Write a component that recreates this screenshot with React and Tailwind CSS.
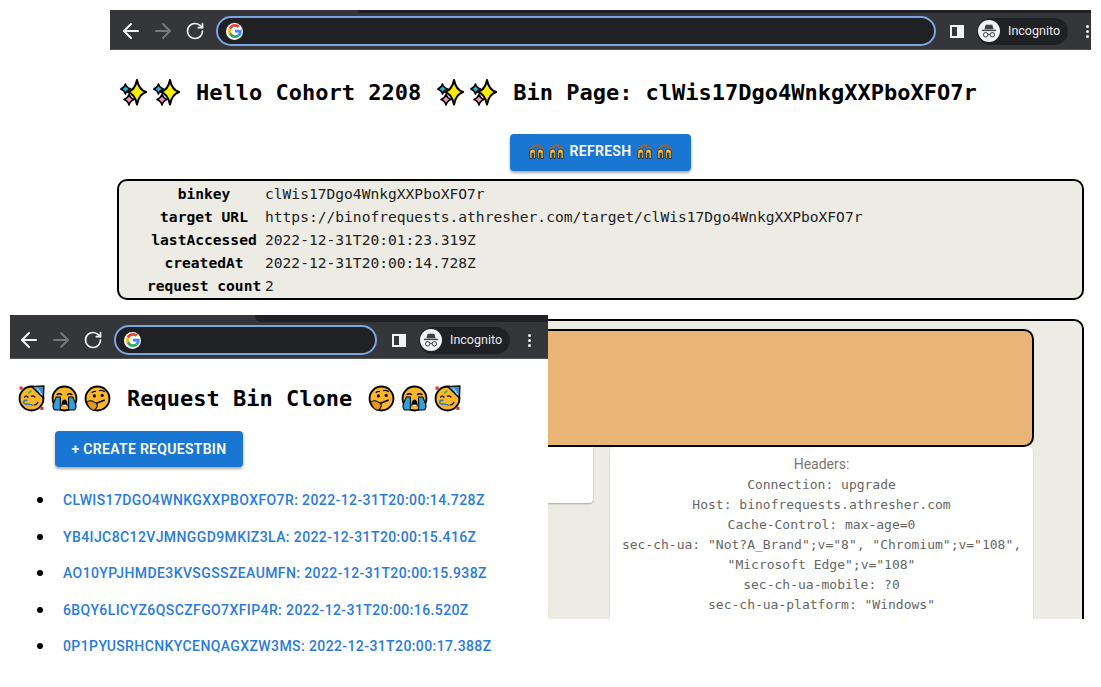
import React from 'react';
import { ArrowLeft, ArrowRight, RotateCw } from 'lucide-react';

const mono = 'font-["DejaVu_Sans_Mono",monospace]';

const GoogleG = () => (
  <div className="flex h-[17px] w-[17px] shrink-0 items-center justify-center rounded-full bg-white">
    <svg viewBox="0 0 48 48" width="14" height="14">
      <path fill="#EA4335" d="M24 9.5c3.5 0 6.7 1.2 9.2 3.6l6.9-6.9C35.9 2.4 30.5 0 24 0 14.6 0 6.5 5.4 2.6 13.2l8 6.2C12.5 13.7 17.8 9.5 24 9.5z" />
      <path fill="#4285F4" d="M46.9 24.5c0-1.600-.2-3.100-.4-4.500H24v9h12.900c-.6 3-2.200 5.500-4.700 7.200l7.700 6c4.500-4.200 7-10.300 7-17.700z" />
      <path fill="#FBBC05" d="M10.500 28.600c-.5-1.400-.8-3-.8-4.600s.3-3.200.8-4.600l-8-6.200C.9 16.500 0 20.100 0 24s.9 7.500 2.600 10.800l7.900-6.200z" />
      <path fill="#34A853" d="M24 48c6.500 0 11.900-2.100 15.900-5.800l-7.700-6c-2.200 1.400-4.900 2.300-8.200 2.300-6.200 0-11.500-4.200-13.400-9.900l-8 6.200C6.500 42.600 14.600 48 24 48z" />
    </svg>
  </div>
);

const IncognitoIcon = () => (
  <div className="flex h-[22px] w-[22px] shrink-0 items-center justify-center rounded-full bg-[#f1f3f4]">
    <svg viewBox="0 0 24 24" width="20" height="20" fill="none">
      <path d="M8 4.500h8l1.500 5.500h-11z" fill="#3c4043" />
      <rect x="3.500" y="10.500" width="17" height="1.600" fill="#3c4043" />
      <circle cx="8" cy="16.500" r="2.700" stroke="#3c4043" strokeWidth="1.200" />
      <circle cx="16" cy="16.500" r="2.700" stroke="#3c4043" strokeWidth="1.200" />
      <path d="M10.500 16h3" stroke="#3c4043" strokeWidth="1.200" />
    </svg>
  </div>
);

const ChromeBar = ({ stripClass, tabClass, pillClass, padClass, sideClass }) => (
  <div className="flex h-full flex-col border-b border-[#55565a] bg-[#35363a]">
    <div className={`flex ${stripClass}`}>
      <div className={tabClass} />
      <div className="flex-1 rounded-bl-[6px] bg-[#202124]" />
    </div>
    <div className={`flex flex-1 items-center ${padClass}`}>
      <div className="flex items-center gap-[8px]">
        <ArrowLeft size={24} color="#f1f3f4" />
        <ArrowRight size={24} color="#77787b" />
        <div className="flex h-[24px] w-[24px] items-center justify-center">
          <RotateCw size={20} color="#f1f3f4" />
        </div>
      </div>
      <div className={`ml-[9px] flex h-[30px] items-center rounded-full border-2 border-[#7ba5e3] bg-[#202124] pl-[8px] ${pillClass}`}>
        <GoogleG />
      </div>
      <div className={`flex h-[13px] w-[14px] justify-end border-2 border-[#f1f3f4] ${sideClass}`}>
        <div className="h-full w-[5px] bg-[#f1f3f4]" />
      </div>
      <div className="ml-[13px] flex h-[27px] w-[91px] items-center gap-[8px] rounded-full bg-[#202124] pl-[1px]">
        <IncognitoIcon />
        <span className="font-['Roboto',sans-serif] text-[12.5px] text-[#e8eaed]">Incognito</span>
      </div>
      <div className="ml-[18px] flex flex-col gap-[2px]">
        <div className="h-[3px] w-[3px] rounded-full bg-[#f1f3f4]" />
        <div className="h-[3px] w-[3px] rounded-full bg-[#f1f3f4]" />
        <div className="h-[3px] w-[3px] rounded-full bg-[#f1f3f4]" />
      </div>
    </div>
  </div>
);

const Sparkles = () => (
  <svg viewBox="0 0 27 27" width="27" height="27" className="shrink-0">
    <path d="M9 15.500 Q10 19 14 20.500 Q10 22 9 26 Q8 22 4 20.500 Q8 19 9 15.500z" fill="#f38fc0" stroke="#000" strokeWidth="1.600" strokeLinejoin="round" />
    <path d="M5.500 5 Q6.300 8.500 10.500 10 Q6.300 11.500 5.500 15 Q4.700 11.500 0.800 10 Q4.700 8.500 5.500 5z" fill="#28b5e0" stroke="#000" strokeWidth="1.600" strokeLinejoin="round" />
    <path d="M17 1 Q19 11 26.200 13 Q19 15 17 25.500 Q15 15 7.800 13 Q15 11 17 1z" fill="#fcec00" stroke="#000" strokeWidth="2" strokeLinejoin="round" />
  </svg>
);

const Face = ({ children }) => (
  <svg viewBox="0 0 26 26" width="27" height="27" className="shrink-0">
    <circle cx="13" cy="13" r="11.500" fill="#fbb62a" stroke="#000" strokeWidth="1.800" />
    {children}
  </svg>
);

const Partying = () => (
  <Face>
    <path d="M13 1.500 L25 0.800 L24.500 12.500z" fill="#3d8ecb" stroke="#000" strokeWidth="1.200" strokeLinejoin="round" />
    <path d="M18 2.500 Q21 5.500 22.500 9.500" stroke="#a5d0f0" strokeWidth="1.100" fill="none" />
    <path d="M10 8 L13 5.500" stroke="#3fae3f" strokeWidth="1.500" />
    <path d="M6 12 Q8 9.500 10 12 M12.500 11 Q15 9.500 16.500 12" stroke="#000" strokeWidth="1.300" fill="none" />
    <path d="M9 14.500 Q5 14.500 5.500 17 Q6 19 11 18.500 Q13 18.500 14 20" stroke="#2a83c9" strokeWidth="1.600" fill="none" />
    <path d="M15 19.500 Q18 19 19.500 16.500" stroke="#000" strokeWidth="1.100" fill="none" />
    <rect x="1.500" y="1.500" width="3" height="3" fill="#d22f27" />
    <rect x="21.500" y="21" width="3" height="3" fill="#d22f27" />
  </Face>
);

const Crying = () => (
  <Face>
    <path d="M5.500 9.500 Q8 7.500 10.500 9.500 M15.500 9.500 Q18 7.500 20.500 9.500" stroke="#000" strokeWidth="1.400" fill="none" />
    <path d="M10 20.500 Q10 14 13 14 Q16 14 16 20.500z" fill="#000" />
    <path d="M11 19 h4 v1.500 h-4z" fill="#fff" />
    <path d="M5 11.500 H9 V24 H3.500 Q1.500 22.500 2 19z" fill="#2fa0dc" stroke="#000" strokeWidth="1" />
    <path d="M17 11.500 H21 L24 19 Q24.500 22.500 22.500 24 H17z" fill="#2fa0dc" stroke="#000" strokeWidth="1" />
  </Face>
);

const Thinking = () => (
  <Face>
    <path d="M7.500 7.500 Q9.500 5.500 11.500 6.500 M14.500 5.500 Q17.500 4.500 20 6.500" stroke="#000" strokeWidth="1.300" fill="none" />
    <circle cx="10" cy="10.500" r="1.500" fill="#000" />
    <circle cx="17.500" cy="10" r="1.500" fill="#000" />
    <path d="M12 17.500 L20 14.500" stroke="#000" strokeWidth="1.500" />
    <path d="M2.500 16.500 Q5 14.500 8 15.500 L12 17.500 Q13.500 20 12 22 L10 24.500 Q5 24 2.500 16.500z" fill="#e5981b" stroke="#000" strokeWidth="1" strokeLinejoin="round" />
  </Face>
);

const RaisedHands = () => (
  <svg viewBox="0 0 15 15" width="15" height="15" className="shrink-0">
    <path d="M2 5 Q7.500 -2.500 13 5" stroke="#b5601b" strokeWidth="2.200" fill="none" strokeDasharray="2 0.500" />
    <path d="M0.700 14.500 V7 Q3 3.500 6.300 6.500 V14.500 H4.500 V9 H3 V14.500z" fill="#fab733" stroke="#1a1a1a" strokeWidth="0.700" strokeLinejoin="round" />
    <path d="M8.700 6.500 Q12 3.500 14.300 7 V14.500 H12 V9 H10.500 V14.500 H8.700z" fill="#fab733" stroke="#1a1a1a" strokeWidth="0.700" strokeLinejoin="round" />
  </svg>
);

const binRows = [
  ['binkey', 'clWis17Dgo4WnkgXXPboXFO7r'],
  ['target URL', 'https://binofrequests.athresher.com/target/clWis17Dgo4WnkgXXPboXFO7r'],
  ['lastAccessed', '2022-12-31T20:01:23.319Z'],
  ['createdAt', '2022-12-31T20:00:14.728Z'],
  ['request count', '2'],
];

const headers = [
  'Connection: upgrade',
  'Host: binofrequests.athresher.com',
  'Cache-Control: max-age=0',
  'sec-ch-ua: "Not?A_Brand";v="8", "Chromium";v="108", "Microsoft Edge";v="108"',
  'sec-ch-ua-mobile: ?0',
  'sec-ch-ua-platform: "Windows"',
];

const bins = [
  'CLWIS17DGO4WNKGXXPBOXFO7R: 2022-12-31T20:00:14.728Z',
  'YB4IJC8C12VJMNGGD9MKIZ3LA: 2022-12-31T20:00:15.416Z',
  'AO10YPJHMDE3KVSGSSZEAUMFN: 2022-12-31T20:00:15.938Z',
  '6BQY6LICYZ6QSCZFGO7XFIP4R: 2022-12-31T20:00:16.520Z',
  '0P1PYUSRHCNKYCENQAGXZW3MS: 2022-12-31T20:00:17.388Z',
];

export default function App() {
  return (
    <div className="relative h-[687px] w-[1101px] overflow-hidden bg-white">
      {/* back window, bin page */}
      <div className="absolute left-[110px] top-[10px] h-[609px] w-[981px]">
        <div className="h-[40px]">
          <ChromeBar stripClass="h-[3px]" tabClass="w-[248px]" padClass="pl-[9px]" pillClass="w-[720px]" sideClass="ml-[14px]" />
        </div>
        <div className={`ml-[10px] mt-[26px] flex h-[32px] items-center gap-[6px] ${mono} text-[22px] font-bold text-black`}>
          <Sparkles /><Sparkles />
          <span className="mx-[10px] whitespace-pre">Hello Cohort 2208</span>
          <Sparkles /><Sparkles />
          <span className="ml-[10px] whitespace-pre">Bin Page: clWis17Dgo4WnkgXXPboXFO7r</span>
        </div>
        <div className="mt-[26px] flex justify-center">
          <button className="flex h-[37px] w-[181px] items-center justify-center gap-[5px] rounded bg-[#1976d2] pb-[3px] font-['Roboto',sans-serif] text-sm font-semibold tracking-[0.3px] text-white shadow-[0_2px_3px_rgba(0,0,0,0.35)]">
            <RaisedHands /><RaisedHands />
            <span className="mx-[1px]">REFRESH</span>
            <RaisedHands /><RaisedHands />
          </button>
        </div>
        <div className={`ml-[7px] mt-[8px] h-[121px] w-[967px] rounded-[10px] border-2 border-black bg-[#edece4] pl-[28px] pt-[1px] ${mono} text-[14.6px]`}>
          {binRows.map(([label, value]) => (
            <div key={label} className="flex h-[23px] items-center">
              <span className="w-[114px] shrink-0 whitespace-pre text-center font-bold text-black">{label}</span>
              <span className="ml-[4px] text-[#222]">{value}</span>
            </div>
          ))}
        </div>
        <div className="ml-[7px] mt-[19px] h-[300px] w-[967px] rounded-t-[10px] border-x-2 border-t-2 border-black bg-[#edece4] pl-[30px] pr-[48px] pt-[8px]">
          <div className="h-[118px] rounded-[10px] border-2 border-black bg-[#e9b576]" />
        </div>
      </div>

      {/* white card and headers sit over the beige panel */}
      <div className="absolute left-[500px] top-[447px] h-[56px] w-[93px] rounded-b bg-white shadow-[0_1px_2px_rgba(0,0,0,0.3)]" />
      <div className={`absolute left-[609px] top-[447px] h-[172px] w-[425px] rounded-t border-x border-[#e2e1d8] bg-white px-[3px] pt-[7px] text-center ${mono} text-[13px] leading-[20px] text-[#666]`}>
        <div className="h-[20px] font-['Roboto',sans-serif] text-sm leading-[20px] text-[#777]">Headers:</div>
        {headers.map((h) => <div key={h} className="relative top-[1px]">{h}</div>)}
      </div>

      {/* front window, bin list */}
      <div className="absolute left-[10px] top-[315px] h-[372px] w-[538px] bg-white">
        <div className="h-[44px]">
          <ChromeBar stripClass="h-[7px]" tabClass="w-[245px]" padClass="pl-[7px]" pillClass="w-[263px]" sideClass="ml-[15px]" />
        </div>
        <div className={`ml-[8px] mt-[23px] flex h-[32px] items-center gap-[6px] ${mono} text-[22px] font-bold text-black`}>
          <Partying /><Crying /><Thinking />
          <span className="mx-[10px] whitespace-pre">Request Bin Clone</span>
          <Thinking /><Crying /><Partying />
        </div>
        <button className="ml-[45px] mt-[17px] flex h-[36px] w-[188px] items-center justify-center rounded bg-[#1976d2] font-['Roboto',sans-serif] text-sm font-semibold tracking-[0.3px] text-white shadow-[0_2px_3px_rgba(0,0,0,0.35)]">
          + CREATE REQUESTBIN
        </button>
        <ul className="ml-[27px] mt-[21.5px] flex flex-col gap-[13.5px]">
          {bins.map((b) => (
            <li key={b} className="flex h-[23px] items-center font-['Roboto',sans-serif] text-sm font-medium tracking-[0.4px] text-[#2a7bdc]">
              <span className="mr-[20px] h-[6px] w-[6px] rounded-full bg-black" />
              {b}
            </li>
          ))}
        </ul>
      </div>
    </div>
  );
}
